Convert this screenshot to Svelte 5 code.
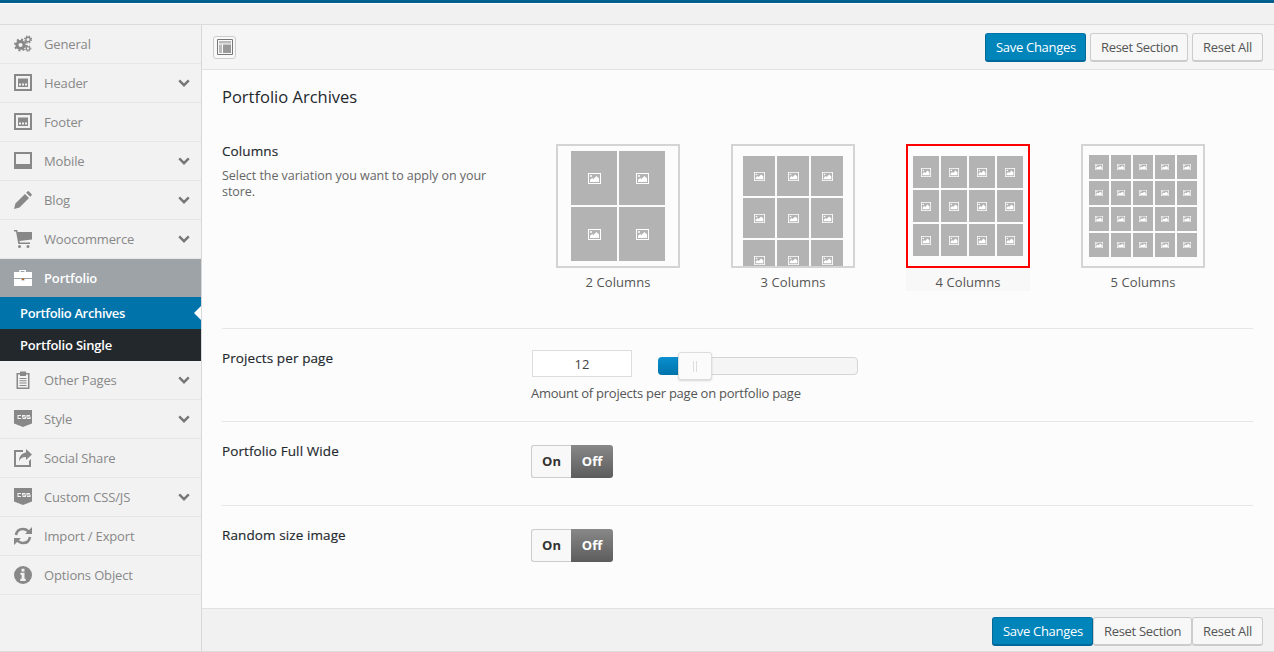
<script>
  const items = [
    { label: 'General', icon: 'gears' },
    { label: 'Header', icon: 'header', chev: true },
    { label: 'Footer', icon: 'header' },
    { label: 'Mobile', icon: 'mobile', chev: true },
    { label: 'Blog', icon: 'pencil', chev: true },
    { label: 'Woocommerce', icon: 'cart', chev: true },
    { label: 'Portfolio', icon: 'case', active: true },
    { label: 'Other Pages', icon: 'clip', chev: true },
    { label: 'Style', icon: 'css', chev: true },
    { label: 'Social Share', icon: 'share' },
    { label: 'Custom CSS/JS', icon: 'css', chev: true },
    { label: 'Import / Export', icon: 'refresh' },
    { label: 'Options Object', icon: 'info' }
  ];
  const layouts = [
    { label: '2 Columns', cls: 'c2', count: 4 },
    { label: '3 Columns', cls: 'c3', count: 9 },
    { label: '4 Columns', cls: 'c4', count: 12, selected: true },
    { label: '5 Columns', cls: 'c5', count: 20 }
  ];
  const toggles = ['Portfolio Full Wide', 'Random size image'];
</script>

<div class="page">
  <div class="topbar"></div>
  <div class="panel">
    <nav class="sidebar">
      {#each items as item}
        <div class="item" class:active={item.active}>
          <svg class="icon" viewBox="0 0 18 18" width="18" height="18">
            {#if item.icon === 'gears'}
              <circle cx="6.500" cy="10" r="3.600" fill="none" stroke="currentColor" stroke-width="3"/>
              <circle cx="6.500" cy="10" r="5.500" fill="none" stroke="currentColor" stroke-width="2" stroke-dasharray="2 2.300"/>
              <circle cx="14" cy="4.500" r="2.200" fill="none" stroke="currentColor" stroke-width="1.400"/>
              <circle cx="14" cy="4.500" r="3.500" fill="none" stroke="currentColor" stroke-width="1.200" stroke-dasharray="1.400 1.400"/>
              <circle cx="14" cy="13.500" r="1.800" fill="none" stroke="currentColor" stroke-width="1.300"/>
              <circle cx="14" cy="13.500" r="2.900" fill="none" stroke="currentColor" stroke-width="1" stroke-dasharray="1.200 1.200"/>
            {:else if item.icon === 'header'}
              <path fill="currentColor" fill-rule="evenodd" d="M0 0h18v17H0zM2 2v13h14V2zM4 4.500h10V13H4z"/>
              <path fill="#f1f1f1" d="M5 9.500h2v2H5zM8 9.500h2v2H8zM11 9.500h2v2h-2z"/>
            {:else if item.icon === 'mobile'}
              <path fill="currentColor" fill-rule="evenodd" d="M0 0h18v17H0zM2 2v10h14V2z"/>
            {:else if item.icon === 'pencil'}
              <path fill="currentColor" d="M0 18l1.400-5.500L11 3l4 4-9.500 9.500zM12.200 1.800l1.500-1.500q.5-.4 1 0l3 3q.4.500 0 1l-1.500 1.500z"/>
            {:else if item.icon === 'cart'}
              <path fill="currentColor" d="M0 0h3.200l.5 2H18v7.500L5.500 11l.3 1.500H16v1.500H4.300L2 1.500H0z"/>
              <circle cx="5.500" cy="16.500" r="1.500" fill="currentColor"/>
              <circle cx="14" cy="16.500" r="1.500" fill="currentColor"/>
            {:else if item.icon === 'case'}
              <path fill="#fff" fill-rule="evenodd" d="M5.500 3V1h7v2H19v6H0V3zM7 2v1h4V2z" transform="scale(.95 1)"/>
              <path fill="#fff" d="M0 10h7.500v1.500h3V10H18v7H0z"/>
              <path fill="#b5651d" d="M8 9.500h2v1.500H8z"/>
            {:else if item.icon === 'clip'}
              <path fill="currentColor" fill-rule="evenodd" d="M2.500 2H6V.500h6V2h3.500v16h-13zM4 3.500v13h10v-13h-2V5H6V3.500z"/>
              <path fill="currentColor" d="M5.500 7h7v1h-7zM5.500 9.300h7v1h-7zM5.500 11.600h7v1h-7zM5.500 13.900h7v1h-7z"/>
            {:else if item.icon === 'css'}
              <path fill="currentColor" d="M0 0h18v13.500l-9 3.500-9-3.500z"/>
              <path fill="none" stroke="#f1f1f1" stroke-width="1.100" d="M7 6H4v3h3M11.500 6h-3v1.500h3V9h-3M16 6h-3v1.500h3V9h-3" transform="translate(0 -.5)"/>
            {:else if item.icon === 'share'}
              <path fill="currentColor" d="M0 1h9v2H2v13h13v-4l2-2v8H0z"/>
              <path fill="currentColor" d="M12 0l6 5.500-6 5.500V8C8 8 6 9.500 5 12.500 4.800 7.500 8 4 12 3.500z"/>
            {:else if item.icon === 'refresh'}
              <path fill="none" stroke="currentColor" stroke-width="2.600" d="M2 8c.6-3.600 3.400-6 7-6 2.500 0 4.500 1.200 6 3M16 10c-.6 3.600-3.400 6-7 6-2.500 0-4.500-1.200-6-3"/>
              <path fill="currentColor" d="M18 0v7h-7zM0 18v-7h7z"/>
            {:else if item.icon === 'info'}
              <circle cx="9" cy="9" r="9" fill="currentColor"/>
              <path fill="#f1f1f1" d="M7.500 2.800h3v2.600h-3zM6.500 6.800h4v6h1.200v2.200H6.300v-2.200h1.300V9H6.500z"/>
            {/if}
          </svg>
          <span class="label">{item.label}</span>
          {#if item.chev}
            <svg class="chev" viewBox="0 0 12 8" width="12" height="8"><path d="M1.200 1.400L6 6.200l4.800-4.800" fill="none" stroke="currentColor" stroke-width="2.400"/></svg>
          {/if}
        </div>
        {#if item.active}
          <div class="sub current">Portfolio Archives</div>
          <div class="sub">Portfolio Single</div>
        {/if}
      {/each}
    </nav>

    <main class="main">
      <header class="bar">
        <button class="layout-btn" aria-label="Toggle layout">
          <svg viewBox="0 0 16 16" width="16" height="16">
            <path fill="none" stroke="#777" stroke-width="1" d="M.5 .5h15v15H.5z"/>
            <path fill="#999" d="M2 2h12v2.500H2zM2 5.500h3V14H2z" opacity=".65"/>
            <path fill="#999" d="M6 5.500h8V14H6z"/>
          </svg>
        </button>
        <div class="actions">
          <button class="btn primary">Save Changes</button>
          <button class="btn">Reset Section</button>
          <button class="btn">Reset All</button>
        </div>
      </header>

      <div class="content">
        <h2>Portfolio Archives</h2>

        <section class="row row-columns">
          <div class="head">
            <h3>Columns</h3>
            <p>Select the variation you want to apply on your store.</p>
          </div>
          <div class="choices">
            {#each layouts as l}
              <div class="choice" class:selected={l.selected}>
                <div class="frame {l.cls}">
                  <div class="tiles">
                    {#each Array(l.count) as _}
                      <div class="tile">
                        <svg class="pic" viewBox="0 0 13 11" preserveAspectRatio="none"><path fill="#fff" fill-rule="evenodd" d="M0 0h13v11H0zM1 1v9h11V1z"/><path fill="#fff" d="M2 9V7l2-2 1.500 1L8.500 3 11 5.500V9z"/><circle cx="3" cy="3" r="1" fill="#fff"/></svg>
                      </div>
                    {/each}
                  </div>
                </div>
                <div class="cap">{l.label}</div>
              </div>
            {/each}
          </div>
        </section>

        <section class="row row-slider">
          <h3>Projects per page</h3>
          <div class="control">
            <div class="slider-line">
              <div class="num">12</div>
              <div class="track">
                <div class="fill"></div>
                <div class="handle"></div>
              </div>
            </div>
            <div class="help">Amount of projects per page on portfolio page</div>
          </div>
        </section>

        {#each toggles as t, i}
          <section class="row row-toggle" class:last={i === 1}>
            <h3>{t}</h3>
            <div class="switch"><span class="on">On</span><span class="off">Off</span></div>
          </section>
        {/each}
      </div>

      <footer class="foot">
        <button class="btn primary">Save Changes</button>
        <button class="btn joined">Reset Section</button>
        <button class="btn joined">Reset All</button>
      </footer>
    </main>
  </div>
</div>

<style>
  :global(body) { margin: 0; background: #f1f1f1; }
  .page {
    width: 1274px; height: 652px; overflow: hidden;
    font-family: "Open Sans", "Noto Sans", sans-serif;
    font-size: 13px; color: #444; background: #f1f1f1;
  }
  .topbar { height: 3px; background: #00608f; border-bottom: 1px solid #fff; margin-bottom: 20px; }
  .panel {
    display: flex; height: 626px; box-sizing: content-box;
    border-top: 1px solid #dcdcdc; border-bottom: 1px solid #dcdcdc;
  }
  .sidebar { width: 201px; flex: none; border-right: 1px solid #d8d8d8; background: #f2f2f2; }
  .item {
    height: 39px; box-sizing: border-box; border-bottom: 1px solid #e6e6e6;
    display: flex; align-items: center; padding-left: 14px; color: #888;
  }
  .item .label { margin-left: 12px; flex: 1; letter-spacing: -.15px; }
  .icon { flex: none; }
  .chev { margin-right: 11px; color: #777; }
  .item.active {
    background: #9ea3a8; color: #fff; border-bottom: 0; height: 38px;
  }
  .item.active .label { font-weight: 600; }
  .sub {
    height: 32px; line-height: 32px; padding-left: 20px; color: #fff; background: #23282d;
    font-weight: 600; letter-spacing: -.2px; position: relative;
  }
  .sub.current { background: #0073aa; letter-spacing: -.35px; }
  .sub.current::after {
    content: ""; position: absolute; right: 0; top: 9px;
    border: 7px solid transparent; border-right-color: #fff; border-left-width: 0;
  }
  .main { flex: 1; display: flex; flex-direction: column; background: #fcfcfc; min-width: 0; }
  .bar {
    height: 44px; flex: none; background: #f5f5f5; border-bottom: 1px solid #e2e2e2;
    display: flex; align-items: center; justify-content: space-between; padding: 0 11px 0 11px;
  }
  .layout-btn {
    width: 23px; height: 23px; padding: 0; background: #f9f9f9; border: 1px solid #ccc; border-radius: 3px;
    display: flex; align-items: center; justify-content: center;
  }
  .actions { display: flex; gap: 4px; align-items: center; margin-top: 1px; }
  .btn {
    height: 29px; box-sizing: border-box; padding: 0 10px;
    font: 13px "Open Sans", sans-serif; letter-spacing: -.3px; color: #555;
    background: #f7f7f7; border: 1px solid #ccc; border-bottom-width: 2px; border-radius: 3px;
    white-space: nowrap;
  }
  .btn.primary { background: #0085ba; border-color: #0073aa #006799 #006799; color: #fff; width: 101px; }
  .actions .btn:nth-child(2) { width: 98px; }
  .actions .btn:nth-child(3) { width: 71px; }
  .content { flex: 1; padding: 0 21px 0 20px; min-height: 0; }
  h2 { margin: 0; padding-top: 15px; height: 27px; font-size: 16.500px; line-height: 24px; font-weight: 500; color: #23282d; }
  h3 { margin: 0; font-size: 13.500px; line-height: 18px; font-weight: 500; color: #23282d; letter-spacing: .1px; -webkit-text-stroke: .15px #23282d; }
  .row { display: flex; border-bottom: 1px solid #e6e6e6; box-sizing: border-box; }
  .row > h3, .row .head { width: 309px; flex: none; }
  .row-columns { height: 217px; padding-top: 30px; }
  .head p { margin: 8px 0 0; width: 280px; line-height: 16px; font-size: 12.500px; color: #666; letter-spacing: -.05px; }
  .choices { display: flex; gap: 51px; margin-left: 25px; margin-top: 2px; align-items: flex-start; }
  .choice { width: 124px; }
  .choice.selected { background: #f8f8f8; }
  .frame {
    width: 124px; height: 124px; box-sizing: border-box; border: 2px solid #d4d4d4; background: #fcfcfc;
    overflow: hidden; display: flex; justify-content: center;
  }
  .selected .frame { border-color: #f00; }
  .tiles { display: grid; gap: 2px; align-content: start; }
  .c2 .tiles { grid-template-columns: repeat(2, 46px); grid-auto-rows: 54px; padding-top: 5px; }
  .c3 .tiles { grid-template-columns: repeat(3, 32px); grid-auto-rows: 40px; padding-top: 10px; }
  .c4 .tiles { grid-template-columns: repeat(4, 26px); grid-auto-rows: 32px; padding-top: 10px; }
  .c5 .tiles { grid-template-columns: repeat(5, 20px); grid-auto-rows: 24px; padding-top: 9px; }
  .tile { background: #b3b3b3; display: flex; align-items: center; justify-content: center; }
  .pic { width: 13px; height: 11px; }
  .c3 .pic { width: 11px; height: 9px; }
  .c4 .pic { width: 10px; height: 9px; }
  .c5 .pic { width: 8px; height: 6px; }
  .cap { height: 23px; line-height: 28px; text-align: center; color: #555; letter-spacing: .1px; }
  .row-slider { height: 93px; padding-top: 21px; }
  .row-slider > h3 { margin-top: -1px; }
  .slider-line { display: flex; align-items: flex-start; }
  .num {
    width: 100px; height: 27px; margin-left: 1px; box-sizing: border-box; background: #fff; border: 1px solid #ddd;
    text-align: center; line-height: 26px; color: #444;
  }
  .track {
    position: relative; width: 200px; height: 18px; margin: 7px 0 0 26px; box-sizing: border-box;
    background: #f5f5f5; border: 1px solid #d5d5d5; border-radius: 4px;
  }
  .fill { position: absolute; left: -1px; top: -1px; width: 24px; height: 18px; background: linear-gradient(#0a8fcf, #0073aa); border-radius: 4px 0 0 4px; }
  .handle {
    position: absolute; left: 19px; top: -6px; width: 34px; height: 28px; box-sizing: border-box;
    background: #fbfbfb; border: 1px solid #ddd; border-radius: 3px; box-shadow: 0 1px 2px rgba(0,0,0,.15);
  }
  .handle::after {
    content: ""; position: absolute; left: 14px; top: 8px; width: 2px; height: 11px;
    border-left: 1px solid #ddd; border-right: 1px solid #ddd;
  }
  .help { margin-top: 7px; line-height: 18px; color: #555; letter-spacing: -.25px; }
  .row-toggle { height: 84px; padding-top: 20px; }
  .row-toggle.last { border-bottom: 0; }
  .switch { display: flex; width: 82px; height: 33px; margin-top: 3px; font-weight: 700; font-size: 13px; line-height: 31px; text-align: center; }
  .on { width: 40px; box-sizing: border-box; background: #f8f8f8; border: 1px solid #ccc; border-right: 0; border-radius: 3px 0 0 3px; color: #333; }
  .off { width: 42px; line-height: 33px; background: linear-gradient(#888, #5c5c5c); color: #fff; border-radius: 0 3px 3px 0; }
  .foot {
    height: 43px; flex: none; background: #f1f1f1; border-top: 1px solid #e2e2e2;
    display: flex; justify-content: flex-end; align-items: center; padding: 2px 11px 0 0; box-sizing: border-box;
  }
  .foot .joined:nth-child(2) { width: 99px; }
  .foot .joined:nth-child(3) { width: 71px; }
</style>
